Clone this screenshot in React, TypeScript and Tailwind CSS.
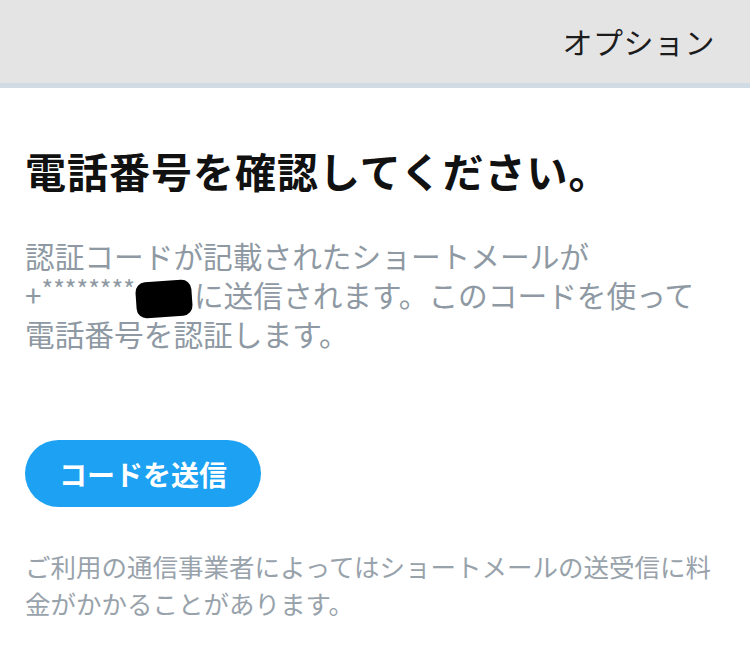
import React from "react";

const font = { fontFamily: '"Noto Sans CJK JP", "Noto Sans", sans-serif' };

export default function App() {
  return (
    <div className="w-[750px] h-[654px] bg-white overflow-hidden" style={font}>
      <div className="h-[88px] bg-[#e4e4e5] border-b-[5px] border-[#d0dbe4] flex items-center justify-end pr-[35px]">
        <span className="text-[30px] text-[#1c1c1c] leading-none tracking-[0.5px] mt-[-2px]">オプション</span>
      </div>
      <div className="px-[25px]">
        <h1 className="mt-[58px] text-[41px] font-bold text-[#111] leading-[48px] tracking-[1px]">
          電話番号を確認してください。
        </h1>
        <p className="mt-[42px] text-[29.7px] leading-[39px] text-[#8e99a3]">
          認証コードが記載されたショートメールが
          <br />
          +<span className="text-[25px] leading-none [vertical-align:8px]">********</span>
          <span className="inline-block align-middle w-[56px] h-[36px] bg-black rounded-[10px] ml-[1px] mr-[2px] -my-[4px] rotate-[-4deg]" />
          に送信されます。このコードを使って
          <br />
          電話番号を認証します。
        </p>
        <button className="mt-[87px] h-[67px] w-[236px] rounded-full bg-[#1da1f2] text-white text-[28px] font-bold flex items-center justify-center">
          コードを送信
        </button>
        <p className="mt-[40px] text-[25.5px] leading-[37px] text-[#98a2ab]">
          ご利用の通信事業者によってはショートメールの送受信に料金がかかることがあります。
        </p>
      </div>
    </div>
  );
}
